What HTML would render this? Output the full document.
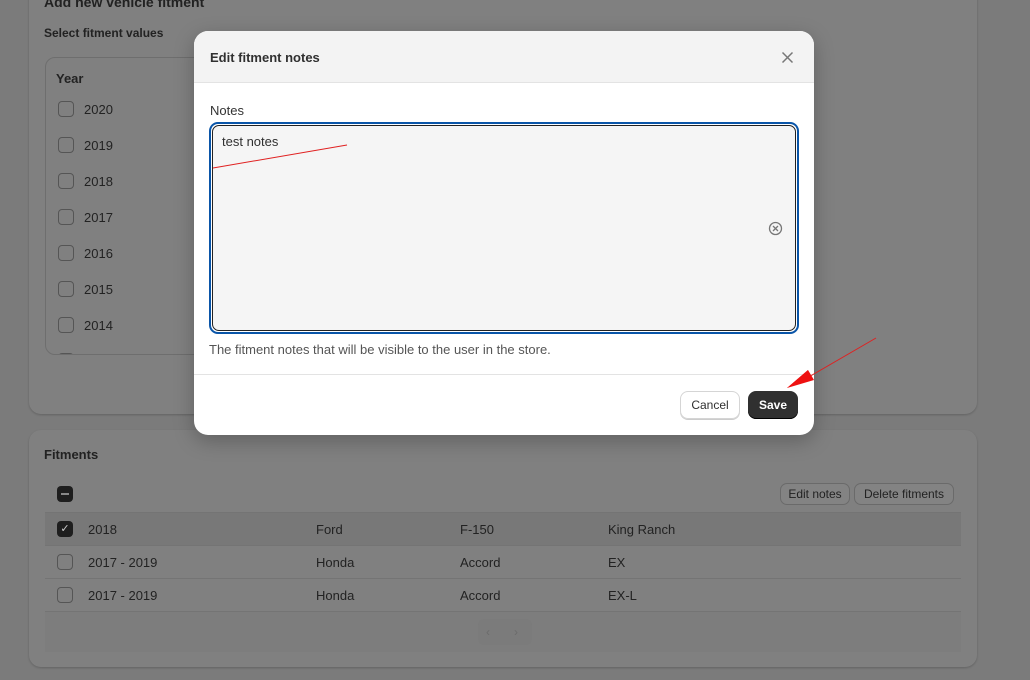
<!DOCTYPE html>
<html><head><style>
*{box-sizing:border-box;margin:0;padding:0}
body{width:1030px;height:680px;background:#7b7b7b;font-family:"Liberation Sans",sans-serif;font-size:13px;color:#222;position:relative;overflow:hidden}
.card{position:absolute;left:29px;width:948px;background:#808080;border-radius:12px;box-shadow:0 1px 2px rgba(0,0,0,.2)}
.abs{position:absolute}
.cb{position:absolute;width:16px;height:16px;border:1px solid #555;border-radius:4px}
.t{position:absolute;color:#222;font-size:13px}
.b{font-weight:bold}
</style></head><body>
<div class="card" style="top:-20px;height:434px"></div>
<div class="t b" style="left:44px;top:-6px;font-size:14px">Add new vehicle fitment</div>
<div class="t b" style="left:44px;top:26px;font-size:12px">Select fitment values</div>
<div class="abs" style="left:45px;top:57px;width:200px;height:298px;border:1px solid #6e6e6e;border-radius:10px;overflow:hidden">
 <div class="t b" style="left:10px;top:13px">Year</div>
 <div class="cb" style="left:12px;top:43px"></div><div class="t" style="left:38px;top:44px">2020</div>
 <div class="cb" style="left:12px;top:79px"></div><div class="t" style="left:38px;top:80px">2019</div>
 <div class="cb" style="left:12px;top:115px"></div><div class="t" style="left:38px;top:116px">2018</div>
 <div class="cb" style="left:12px;top:151px"></div><div class="t" style="left:38px;top:152px">2017</div>
 <div class="cb" style="left:12px;top:187px"></div><div class="t" style="left:38px;top:188px">2016</div>
 <div class="cb" style="left:12px;top:223px"></div><div class="t" style="left:38px;top:224px">2015</div>
 <div class="cb" style="left:12px;top:259px"></div><div class="t" style="left:38px;top:260px">2014</div>
 <div class="cb" style="left:12px;top:295px"></div>
</div>

<div class="card" style="top:430px;height:237px"></div>
<div class="t b" style="left:44px;top:447px;font-size:13px">Fitments</div>
<div class="abs" style="left:57px;top:486px;width:16px;height:16px;background:#1e1e1e;border-radius:4px"><div class="abs" style="left:4px;top:7px;width:8px;height:2px;background:#888"></div></div>
<div class="abs" style="left:780px;top:483px;width:70px;height:22px;border:1px solid #6a6a6a;border-radius:7px;background:#838383;font-size:12px;text-align:center;line-height:20px">Edit notes</div>
<div class="abs" style="left:854px;top:483px;width:100px;height:22px;border:1px solid #6a6a6a;border-radius:7px;background:#838383;font-size:12px;text-align:center;line-height:20px">Delete fitments</div>
<div class="abs" style="left:45px;top:512px;width:916px;height:1px;background:#747474"></div>
<div class="abs" style="left:45px;top:513px;width:916px;height:33px;background:#787878"></div>
<div class="abs" style="left:45px;top:545px;width:916px;height:1px;background:#747474"></div>
<div class="abs" style="left:45px;top:578px;width:916px;height:1px;background:#747474"></div>
<div class="abs" style="left:45px;top:611px;width:916px;height:1px;background:#747474"></div>
<div class="abs" style="left:45px;top:612px;width:916px;height:40px;background:#7d7d7d"></div>
<div class="abs" style="left:478px;top:619px;width:54px;height:26px;background:#7b7b7b;border-radius:6px;color:#6b6b6b;font-size:12px;line-height:26px"><span style="position:absolute;left:8px">‹</span><span style="position:absolute;left:36px">›</span></div>
<div class="abs" style="left:57px;top:521px;width:16px;height:16px;background:#1e1e1e;border-radius:4px;color:#ccc;font-size:11px;text-align:center;line-height:16px">✓</div>
<div class="t" style="left:88px;top:522px">2018</div><div class="t" style="left:316px;top:522px">Ford</div><div class="t" style="left:460px;top:522px">F-150</div><div class="t" style="left:608px;top:522px">King Ranch</div>
<div class="cb" style="left:57px;top:554px"></div>
<div class="t" style="left:88px;top:555px">2017 - 2019</div><div class="t" style="left:316px;top:555px">Honda</div><div class="t" style="left:460px;top:555px">Accord</div><div class="t" style="left:608px;top:555px">EX</div>
<div class="cb" style="left:57px;top:587px"></div>
<div class="t" style="left:88px;top:588px">2017 - 2019</div><div class="t" style="left:316px;top:588px">Honda</div><div class="t" style="left:460px;top:588px">Accord</div><div class="t" style="left:608px;top:588px">EX-L</div>

<div class="abs" style="left:194px;top:31px;width:620px;height:404px;background:#fff;border-radius:14px;overflow:hidden;box-shadow:0 6px 20px rgba(0,0,0,.25)">
 <div class="abs" style="left:0;top:0;width:620px;height:52px;background:#f3f3f3;border-bottom:1px solid #e3e3e3"></div>
 <div class="t b" style="left:16px;top:19px;font-size:13px;color:#303030">Edit fitment notes</div>
 <svg class="abs" style="left:587px;top:20px" width="13" height="13" viewBox="0 0 13 13"><path d="M1.5 1.5L11.5 11.5M11.5 1.5L1.5 11.5" stroke="#777" stroke-width="1.5"/></svg>
 <div class="t" style="left:16px;top:72px;color:#333">Notes</div>
 <div class="abs" style="left:15px;top:91px;width:590px;height:212px;border:2px solid #0a55a8;border-radius:9px;padding:1px"><div style="width:100%;height:100%;border:1px solid #222;border-radius:7px;background:#f5f5f5"></div></div>
 <div class="t" style="left:28px;top:103px;color:#303030">test notes</div>
 <svg class="abs" style="left:574px;top:190px" width="15" height="15" viewBox="0 0 15 15"><circle cx="7.5" cy="7.5" r="6" fill="none" stroke="#777" stroke-width="1.3"/><path d="M5 5L10 10M10 5L5 10" stroke="#777" stroke-width="1.3"/></svg>
 <div class="t" style="left:15px;top:311px;color:#555">The fitment notes that will be visible to the user in the store.</div>
 <div class="abs" style="left:0;top:343px;width:620px;height:1px;background:#e3e3e3"></div>
 <div class="abs" style="left:486px;top:360px;width:60px;height:28px;border:1px solid #d5d5d5;border-radius:8px;box-shadow:0 1px 0 #ccc;font-size:12px;text-align:center;line-height:26px;color:#303030">Cancel</div>
 <div class="abs" style="left:554px;top:360px;width:50px;height:28px;background:#303030;border-radius:8px;box-shadow:inset 0 -1px 0 #000;font-size:12px;font-weight:bold;text-align:center;line-height:28px;color:#fff">Save</div>
</div>
<svg class="abs" style="left:0;top:0" width="1030" height="680"><path d="M213 168L347 145" stroke="#e02020" stroke-width="1"/><path d="M876 338L800 382" stroke="#e02020" stroke-width="1"/><path d="M787 388L808 370L803 381Z" fill="#ee1111"/><path d="M787 388L808 370L814 380Z" fill="#ee1111"/></svg>
</body></html>
